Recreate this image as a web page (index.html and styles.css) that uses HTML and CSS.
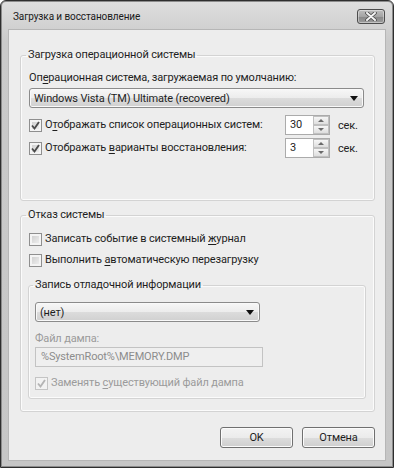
FILE: index.html
```html
<!DOCTYPE html>
<html lang="ru">
<head>
  <meta charset="UTF-8">
  <title>Загрузка и восстановление</title>
  <link rel="stylesheet" href="styles.css">
</head>
<body>
  <div class="window">
    <div class="titlebar">
      <span class="title">Загрузка и восстановление</span>
      <span class="close">
        <svg width="12" height="9" viewBox="0 0 12 9">
          <path d="M2 1 L10 8 M10 1 L2 8" stroke="#4a4a4a" stroke-width="3.6" stroke-linecap="round"/>
          <path d="M2 1 L10 8 M10 1 L2 8" stroke="#f4f4f4" stroke-width="2" stroke-linecap="round"/>
        </svg>
      </span>
    </div>

    <div class="client">
      <fieldset class="group g1">
        <legend>Загрузка операционной системы</legend>
        <div class="lbl lbl-os">Оп<u>е</u>рационная система, загружаемая по умолчанию:</div>
        <div class="combo wide">
          <span>Windows Vista (TM) Ultimate (recovered)</span>
          <i class="arrow"></i>
        </div>
        <div class="row r1">
          <label class="check"><span class="cb"><svg width="11" height="11" viewBox="0 0 11 11"><path d="M2 5.5 L4.5 8.5 L9 2" fill="none" stroke="#4b4b4b" stroke-width="1.9"/></svg></span><span>О<u>т</u>ображать список операционных систем:</span></label>
          <div class="spin"><span class="val">30</span><span class="btns"><b class="up"></b><b class="down"></b></span></div>
          <span>сек.</span>
        </div>
        <div class="row r2">
          <label class="check"><span class="cb"><svg width="11" height="11" viewBox="0 0 11 11"><path d="M2 5.5 L4.5 8.5 L9 2" fill="none" stroke="#4b4b4b" stroke-width="1.9"/></svg></span><span>Отображать <u>в</u>арианты восстановления:</span></label>
          <div class="spin"><span class="val">3</span><span class="btns"><b class="up"></b><b class="down"></b></span></div>
          <span>сек.</span>
        </div>
      </fieldset>

      <fieldset class="group g2">
        <legend>Отказ системы</legend>
        <label class="check c1"><span class="cb"></span><span>Записать событие в системный <u>ж</u>урнал</span></label>
        <label class="check c2"><span class="cb"></span><span>Выполнить <u>а</u>втоматическую перезагрузку</span></label>

        <fieldset class="group inner">
          <legend>Запись отладочной информации</legend>
          <div class="combo narrow">
            <span>(нет)</span>
            <i class="arrow"></i>
          </div>
          <div class="lbl disabled dump-lbl">Файл дампа:</div>
          <div class="field">%SystemRoot%\MEMORY.DMP</div>
          <label class="check disabled c3"><span class="cb dis"><svg width="11" height="11" viewBox="0 0 11 11"><path d="M2 5.5 L4.5 8.5 L9 2" fill="none" stroke="#b4b4b4" stroke-width="1.9"/></svg></span><span>Заменять <u>с</u>уществующий файл дампа</span></label>
        </fieldset>
      </fieldset>

      <div class="buttons">
        <button>OK</button>
        <button>Отмена</button>
      </div>
    </div>
  </div>
</body>
</html>
```

FILE: styles.css
```css
body { margin: 0; background: #ffffff; font-family: Roboto, "Noto Sans", sans-serif; font-size: 11px; letter-spacing: -0.15px; color: #1e1e1e; }
u { text-decoration: underline; text-underline-offset: 2px; }

.window { width: 394px; height: 468px; box-sizing: border-box; border: 1px solid #2e2e2e; border-radius: 6px 6px 0 0; background: linear-gradient(#dedede, #cacaca 40px, #c6c6c6); box-shadow: inset 0 0 0 1px #8c8c8c; padding: 0 7px 6px; display: flex; flex-direction: column; }
.titlebar { height: 28px; display: flex; align-items: center; justify-content: space-between; padding-left: 5px; }
.title { font-size: 10px; letter-spacing: -0.1px; color: #1a1a1a; margin-top: 2px; }
.close { width: 26px; height: 13px; margin: 2px 1px 0 0; border: 1px solid #4c4c4c; border-radius: 3px; background: linear-gradient(#bdbdbd, #a4a4a4 50%, #878787 51%, #9c9c9c); box-shadow: inset 0 0 0 1px rgba(255,255,255,0.4); display: flex; align-items: center; justify-content: center; }
.close svg { display: block; }

.client { flex: 1; background: #ededed; border: 1px solid #b6b6b6; padding: 17px 10px 0 11px; display: flex; flex-direction: column; }

.group { margin: 0; padding: 0 10px 0 8px; border: 1px solid #d3d3d3; border-radius: 3px; box-shadow: inset 0 0 0 1px #fbfbfb; }
.group legend { padding: 0 2px; margin-left: -3px; line-height: 16px; color: #1e1e1e; }

.lbl { line-height: 16px; }
.lbl-os { margin-top: 7px; }

.combo { height: 20px; box-sizing: border-box; border: 1px solid #8b8b8b; border-radius: 3px; background: linear-gradient(#f7f7f7, #ececec 50%, #dcdcdc 51%, #d0d0d0); box-shadow: inset 0 0 0 1px #f9f9f9; display: flex; align-items: center; justify-content: space-between; padding: 0 5px 0 4px; }
.combo.wide { margin-top: 2px; }
.arrow { width: 0; height: 0; border-left: 4px solid transparent; border-right: 4px solid transparent; border-top: 5px solid #111; }

.row { display: grid; grid-template-columns: 248px 45px auto; column-gap: 8px; align-items: center; height: 20px; }
.r1 { margin-top: 7px; }
.r2 { margin-top: 3px; }
.g1 { padding-bottom: 42px; }

.check { display: flex; align-items: center; gap: 3px; line-height: 16px; white-space: nowrap; }
.cb { width: 13px; height: 13px; box-sizing: border-box; border: 1px solid #8f8f8f; background: linear-gradient(135deg, #c9c9c9, #f5f5f5); box-shadow: inset 0 0 0 2px #f4f4f4; display: flex; align-items: center; justify-content: center; flex: none; }
.cb svg { display: block; }
.cb.dis { border-color: #c4c4c4; background: #f2f2f2; box-shadow: none; }

.spin { height: 20px; box-sizing: border-box; border: 1px solid #ababab; background: #ffffff; display: flex; align-items: stretch; }
.spin .val { flex: 1; padding-left: 4px; line-height: 18px; }
.spin .btns { width: 16px; display: flex; flex-direction: column; }
.spin b { flex: 1; border: 1px solid #c0c0c0; background: linear-gradient(#f6f6f6, #dedede); display: flex; align-items: center; justify-content: center; }
.spin b::after { content: ""; width: 0; height: 0; border-left: 3px solid transparent; border-right: 3px solid transparent; }
.spin .up::after { border-bottom: 3px solid #6a6a6a; }
.spin .down::after { border-top: 3px solid #6a6a6a; }

.g2 { margin-top: 6px; padding-bottom: 12px; }
.c1 { margin-top: 8px; }
.c2 { margin-top: 5px; }

.inner { margin: 9px -2px 0 -1px; padding: 0 6px 7px 6px; }
.inner legend { margin-left: -2px; }
.combo.narrow { width: 225px; margin-top: 9px; }
.disabled { color: #9b9b9b; }
.dump-lbl { line-height: 14px; margin-top: 10px; }
.field { width: 228px; height: 20px; box-sizing: border-box; border: 1px solid #c3c3c3; background: #efefef; color: #8c8c8c; line-height: 18px; padding-left: 5px; margin-top: 1px; }
.c3 { margin-top: 8px; }

.buttons { display: flex; justify-content: flex-end; gap: 9px; margin-top: 15px; }
.buttons button { width: 73px; height: 21px; font-family: inherit; font-size: 11px; letter-spacing: inherit; color: #1e1e1e; border: 1px solid #707070; border-radius: 3px; background: linear-gradient(#f3f3f3, #ebebeb 50%, #dddddd 51%, #cfcfcf); box-shadow: inset 0 0 0 1px #fbfbfb; padding: 0; }
```
